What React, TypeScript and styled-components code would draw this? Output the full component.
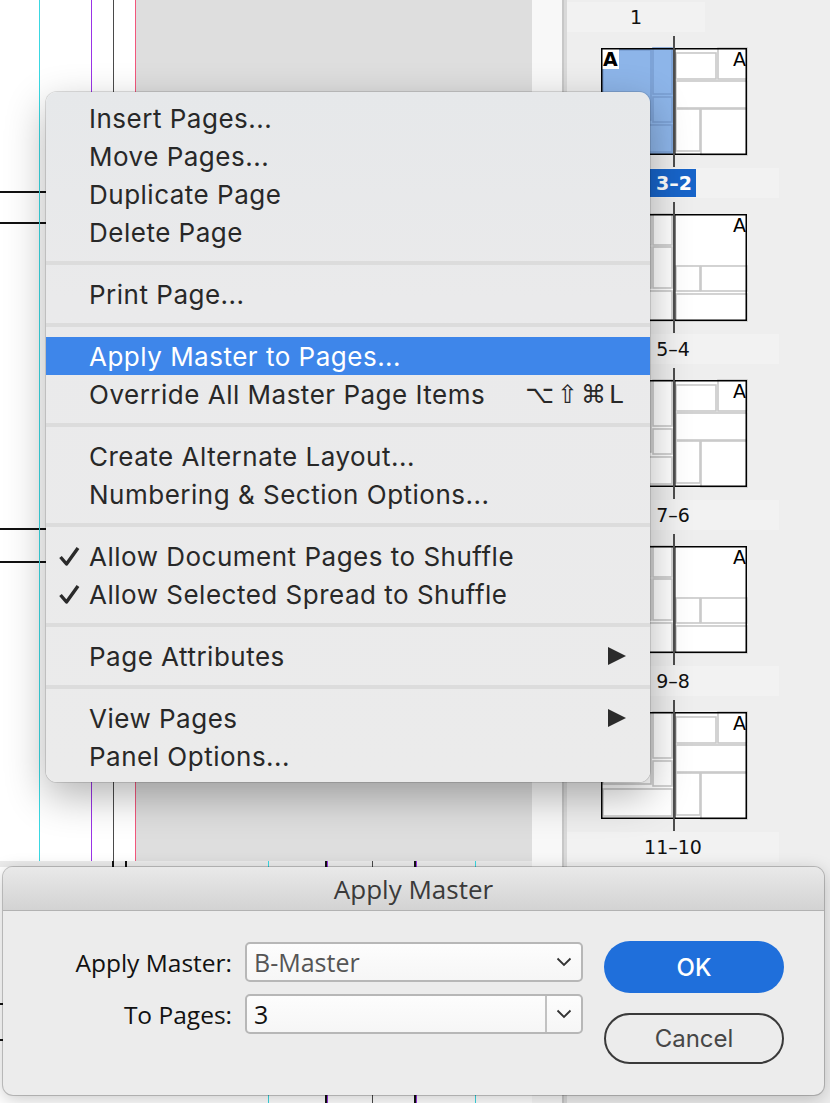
import React from 'react';
import styled, { createGlobalStyle } from 'styled-components';

const GlobalStyle = createGlobalStyle`
  html, body {
    margin: 0;
    padding: 0;
    background: #ffffff;
  }
  body {
    width: 830px;
    height: 1103px;
    overflow: hidden;
  }
`;

type Frame = [number, number, number, number];

const LEFT_A: Frame[] = [[2, 2, 48, 70], [52, 0, 19, 46], [52, 49, 19, 25], [2, 77, 69, 27]];
const LEFT_B: Frame[] = [[2, 0, 48, 31], [52, 0, 19, 31], [2, 33, 48, 41], [52, 33, 19, 41], [2, 77, 69, 30]];
const RIGHT_A: Frame[] = [[2, 5, 40, 26], [44, 0, 29, 31], [2, 33, 71, 27], [2, 61, 24, 42], [27, 61, 46, 46]];
const RIGHT_B: Frame[] = [[2, 52, 24, 25], [27, 52, 46, 25], [2, 80, 71, 27]];

interface ISpreadProps {
    kind: 'a' | 'b';
    selected?: boolean;
}

const SpreadThumb: React.FC<ISpreadProps> = ({ kind, selected }): React.ReactElement => {
    const left = kind === 'a' ? LEFT_A : LEFT_B;
    const right = kind === 'a' ? RIGHT_A : RIGHT_B;
    const leftFill = selected ? '#8db5e9' : '#ffffff';
    const leftStroke = selected ? '#7a9fd2' : '#c8c8c8';
    return (
        <ThumbSvg width={148} height={131} viewBox="0 0 148 131">
            <g transform="translate(1 12)">
                <rect x={0} y={0} width={73} height={107} fill={leftFill} />
                {left.map(([x, y, w, h], i) => (
                    <rect key={i} x={x} y={y} width={w} height={h} fill={leftFill} stroke={leftStroke} strokeWidth={1.6} />
                ))}
                <rect x={1} y={1} width={17} height={20} fill="#ffffff" />
                <text x={2} y={18} fontFamily="DejaVu Sans, sans-serif" fontWeight={700} fontSize={19} fill="#000">A</text>
                <rect x={0.75} y={0.75} width={72.5} height={105.5} fill="none" stroke="#000" strokeWidth={1.5} />
            </g>
            <g transform="translate(74 12)">
                <rect x={0} y={0} width={73} height={107} fill="#ffffff" />
                {right.map(([x, y, w, h], i) => (
                    <rect key={i} x={x} y={y} width={w} height={h} fill="#ffffff" stroke="#c8c8c8" strokeWidth={1.6} />
                ))}
                <text x={72} y={18} textAnchor="end" fontFamily="DejaVu Sans, sans-serif" fontSize={19} fill="#000">A</text>
                <rect x={0.75} y={0.75} width={71.5} height={105.5} fill="none" stroke="#000" strokeWidth={1.5} />
            </g>
            <line x1={74} y1={0} x2={74} y2={131} stroke="#4d4d4d" strokeWidth={2} />
        </ThumbSvg>
    );
};

const Check: React.FC = (): React.ReactElement => (
    <svg width={22} height={22} viewBox="0 0 22 22">
        <path d="M2.5 12 L8.5 19 L20 3" fill="none" stroke="#2a2a2a" strokeWidth={3.4} strokeLinejoin="round" />
    </svg>
);

const SubArrow: React.FC = (): React.ReactElement => (
    <svg width={18} height={18} viewBox="0 0 18 18">
        <polygon points="0,0 18,9 0,18" fill="#2b2b2b" />
    </svg>
);

const Chevron: React.FC = (): React.ReactElement => (
    <svg width={16} height={10} viewBox="0 0 16 10">
        <path d="M1.5 1.5 L8 8 L14.5 1.5" fill="none" stroke="#333" strokeWidth={1.8} />
    </svg>
);

interface IItem {
    label?: string;
    checked?: boolean;
    active?: boolean;
    shortcut?: string;
    submenu?: boolean;
}

const MENU: IItem[] = [
    { label: 'Insert Pages...' },
    { label: 'Move Pages...' },
    { label: 'Duplicate Page' },
    { label: 'Delete Page' },
    {},
    { label: 'Print Page...' },
    {},
    { label: 'Apply Master to Pages...', active: true },
    { label: 'Override All Master Page Items', shortcut: '⌥⇧⌘L' },
    {},
    { label: 'Create Alternate Layout...' },
    { label: 'Numbering & Section Options...' },
    {},
    { label: 'Allow Document Pages to Shuffle', checked: true },
    { label: 'Allow Selected Spread to Shuffle', checked: true },
    {},
    { label: 'Page Attributes', submenu: true },
    {},
    { label: 'View Pages', submenu: true },
    { label: 'Panel Options...' },
];

const SPREADS: { label: string; kind: 'a' | 'b'; selected?: boolean }[] = [
    { label: '3–2', kind: 'a', selected: true },
    { label: '5–4', kind: 'b' },
    { label: '7–6', kind: 'a' },
    { label: '9–8', kind: 'b' },
    { label: '11–10', kind: 'a' },
];

const App: React.FC = (): React.ReactElement => (
    <>
        <GlobalStyle />
        <Screen>
            <Canvas>
                <UpperPage>
                    <Margin />
                    <Pasteboard />
                    <HRule $y={191} $w={136} />
                    <HRule $y={222} $w={136} />
                    <HRule $y={528} $w={136} />
                    <HRule $y={561} $w={136} />
                    <VGuide $x={39} $color="#3ad8e2" />
                    <VGuide $x={91} $color="#9a34e6" />
                    <VGuide $x={113} $color="#4a4a4a" />
                    <VGuide $x={135} $color="#f2577c" />
                </UpperPage>
                <TickStrip>
                    <VGuide $x={112} $color="#111" $w={2} />
                    <VGuide $x={125} $color="#111" $w={2} />
                    <VGuide $x={268} $color="#3ad8e2" />
                    <VGuide $x={325} $color="#111" $w={2} />
                    <VGuide $x={327} $color="#9a34e6" />
                    <VGuide $x={372} $color="#4a4a4a" />
                    <VGuide $x={414} $color="#111" $w={2} />
                    <VGuide $x={416} $color="#9a34e6" />
                    <VGuide $x={475} $color="#3ad8e2" />
                </TickStrip>
                <LowerPage>
                    <HRule $y={136} $w={12} />
                    <HRule $y={172} $w={12} />
                    <VGuide $x={268} $color="#3ad8e2" />
                    <VGuide $x={325} $color="#111" $w={2} />
                    <VGuide $x={327} $color="#9a34e6" />
                    <VGuide $x={372} $color="#4a4a4a" />
                    <VGuide $x={414} $color="#111" $w={2} />
                    <VGuide $x={416} $color="#9a34e6" />
                    <VGuide $x={475} $color="#3ad8e2" />
                </LowerPage>
            </Canvas>
            <PasteStrip />
            <PanelDivider />
            <PagesPanel>
                <LabelBand $width={138}>1</LabelBand>
                {SPREADS.map((s) => (
                    <React.Fragment key={s.label}>
                        <SpreadThumb kind={s.kind} selected={s.selected} />
                        <LabelBand $width={212}>
                            {s.selected ? <SelectedLabel>{s.label}</SelectedLabel> : s.label}
                        </LabelBand>
                    </React.Fragment>
                ))}
            </PagesPanel>

            <Menu>
                {MENU.map((item, i) => item.label ? (
                    <MenuItem key={i} $active={item.active}>
                        <CheckSlot>{item.checked && <Check />}</CheckSlot>
                        <ItemLabel>{item.label}</ItemLabel>
                        {item.shortcut && <Shortcut>{item.shortcut}</Shortcut>}
                        {item.submenu && <SubArrow />}
                    </MenuItem>
                ) : <Separator key={i} />)}
            </Menu>

            <Dialog>
                <TitleBar>Apply Master</TitleBar>
                <DialogBody>
                    <Form>
                        <FieldLabel>Apply Master:</FieldLabel>
                        <Field>
                            <FieldValue $muted>B-Master</FieldValue>
                            <ChevronSlot><Chevron /></ChevronSlot>
                        </Field>
                        <FieldLabel>To Pages:</FieldLabel>
                        <Field>
                            <FieldValue>3</FieldValue>
                            <ChevronSlot $divided><Chevron /></ChevronSlot>
                        </Field>
                    </Form>
                    <Buttons>
                        <PrimaryButton>OK</PrimaryButton>
                        <SecondaryButton>Cancel</SecondaryButton>
                    </Buttons>
                </DialogBody>
            </Dialog>
        </Screen>
    </>
);

export default App;

const Screen = styled.div`
    position: relative;
    width: 830px;
    height: 1103px;
    overflow: hidden;
    display: flex;
    font-family: Inter, "Liberation Sans", sans-serif;
`;

const Canvas = styled.div`
    width: 532px;
    display: flex;
    flex-direction: column;
`;

const UpperPage = styled.div`
    position: relative;
    height: 861px;
    display: flex;
`;

const Margin = styled.div`
    width: 136px;
    background: #ffffff;
`;

const Pasteboard = styled.div`
    flex: 1;
    background: #dedede;
`;

const TickStrip = styled.div`
    position: relative;
    height: 6px;
    background: #ebebeb;
`;

const LowerPage = styled.div`
    position: relative;
    flex: 1;
    background: #ffffff;
`;

const VGuide = styled.div<{ $x: number; $color: string; $w?: number }>`
    position: absolute;
    top: 0;
    bottom: 0;
    left: ${(p) => p.$x}px;
    width: ${(p) => p.$w ?? 1}px;
    background: ${(p) => p.$color};
`;

const HRule = styled.div<{ $y: number; $w: number }>`
    position: absolute;
    left: 0;
    top: ${(p) => p.$y}px;
    width: ${(p) => p.$w}px;
    height: 2px;
    background: #111111;
`;

const PasteStrip = styled.div`
    width: 30px;
    background: #f8f8f8;
`;

const PanelDivider = styled.div`
    width: 5px;
    background: linear-gradient(to right, #c7c7c7 0 2px, #d9d9d9 2px 5px);
`;

const PagesPanel = styled.div`
    flex: 1;
    background: #eeeeee;
    padding-top: 2px;
    display: flex;
    flex-direction: column;
`;

const ThumbSvg = styled.svg`
    display: block;
    margin: 4px 0 1px 33px;
`;

const LabelBand = styled.div<{ $width: number }>`
    width: ${(p) => p.$width}px;
    height: 30px;
    flex: none;
    background: #f2f2f2;
    display: flex;
    align-items: center;
    justify-content: center;
    font-family: "DejaVu Sans", sans-serif;
    font-size: 19px;
    color: #111111;
`;

const SelectedLabel = styled.span`
    background: #1764c9;
    color: #ffffff;
    font-weight: 700;
    padding: 0 4px 0 6px;
    height: 28px;
    line-height: 28px;
`;

const Menu = styled.div`
    position: absolute;
    left: 46px;
    top: 92px;
    width: 604px;
    padding: 7px 0;
    border-radius: 11px;
    background: linear-gradient(180deg, #e6e8ea 0%, #eaeaeb 30%, #ebebeb 100%);
    box-shadow: 0 0 0 1px rgba(0, 0, 0, 0.12), 0 14px 40px rgba(0, 0, 0, 0.3);
    font-size: 26px;
    letter-spacing: 0.5px;
    color: #282828;
`;

const MenuItem = styled.div<{ $active?: boolean }>`
    height: 38px;
    display: grid;
    grid-template-columns: 31px 1fr auto;
    align-items: center;
    padding: 0 24px 0 12px;
    background: ${(p) => (p.$active ? '#3e86ea' : 'transparent')};
    color: ${(p) => (p.$active ? '#ffffff' : '#282828')};
`;

const CheckSlot = styled.span`
    display: flex;
    align-items: center;
`;

const ItemLabel = styled.span`
    justify-self: start;
    white-space: nowrap;
`;

const Shortcut = styled.span`
    font-family: "DejaVu Sans", sans-serif;
    font-size: 25px;
    letter-spacing: 3px;
    white-space: nowrap;
`;

const Separator = styled.div`
    height: 24px;
    display: flex;
    align-items: center;
    &::after {
        content: '';
        flex: 1;
        height: 4px;
        background: #dcdcdc;
    }
`;

const Dialog = styled.div`
    position: absolute;
    left: 3px;
    top: 867px;
    width: 821px;
    height: 228px;
    border-radius: 10px;
    background: #ececec;
    box-shadow: 0 0 0 1px rgba(0, 0, 0, 0.2), 0 4px 18px rgba(0, 0, 0, 0.22);
    overflow: hidden;
    display: flex;
    flex-direction: column;
    font-family: "Open Sans", "DejaVu Sans", sans-serif;
`;

const TitleBar = styled.div`
    height: 43px;
    border-bottom: 1px solid #b2b2b2;
    background: linear-gradient(180deg, #e9e9e9, #d3d3d3);
    display: flex;
    align-items: center;
    justify-content: center;
    font-size: 26px;
    color: #3a3a3a;
`;

const DialogBody = styled.div`
    display: flex;
    align-items: flex-start;
    gap: 21px;
    padding-top: 31px;
`;

const Form = styled.div`
    display: grid;
    grid-template-columns: 229px 338px;
    grid-auto-rows: 40px;
    column-gap: 13px;
    row-gap: 12px;
    align-items: center;
`;

const FieldLabel = styled.div`
    text-align: right;
    font-size: 24.5px;
    color: #111111;
`;

const Field = styled.div`
    height: 40px;
    box-sizing: border-box;
    border: 2px solid #b7b7b7;
    border-radius: 5px;
    background: linear-gradient(180deg, #fdfdfd, #f6f6f6);
    display: flex;
    align-items: center;
`;

const FieldValue = styled.div<{ $muted?: boolean }>`
    flex: 1;
    padding-left: 7px;
    font-size: 25px;
    color: ${(p) => (p.$muted ? '#555555' : '#111111')};
`;

const ChevronSlot = styled.div<{ $divided?: boolean }>`
    width: 34px;
    height: 100%;
    display: flex;
    align-items: center;
    justify-content: center;
    border-left: ${(p) => (p.$divided ? '2px solid #c2c2c2' : '2px solid transparent')};
`;

const Buttons = styled.div`
    margin-top: -1px;
    display: flex;
    flex-direction: column;
    gap: 20px;
`;

const PrimaryButton = styled.div`
    width: 180px;
    height: 52px;
    border-radius: 26px;
    background: #1f6fdb;
    color: #ffffff;
    display: flex;
    align-items: center;
    justify-content: center;
    font-family: Inter, sans-serif;
    font-size: 24px;
    font-weight: 500;
`;

const SecondaryButton = styled.div`
    width: 180px;
    height: 51px;
    box-sizing: border-box;
    border-radius: 26px;
    border: 2px solid #3a3a3a;
    color: #474747;
    display: flex;
    align-items: center;
    justify-content: center;
    font-family: Inter, sans-serif;
    font-size: 24px;
`;
